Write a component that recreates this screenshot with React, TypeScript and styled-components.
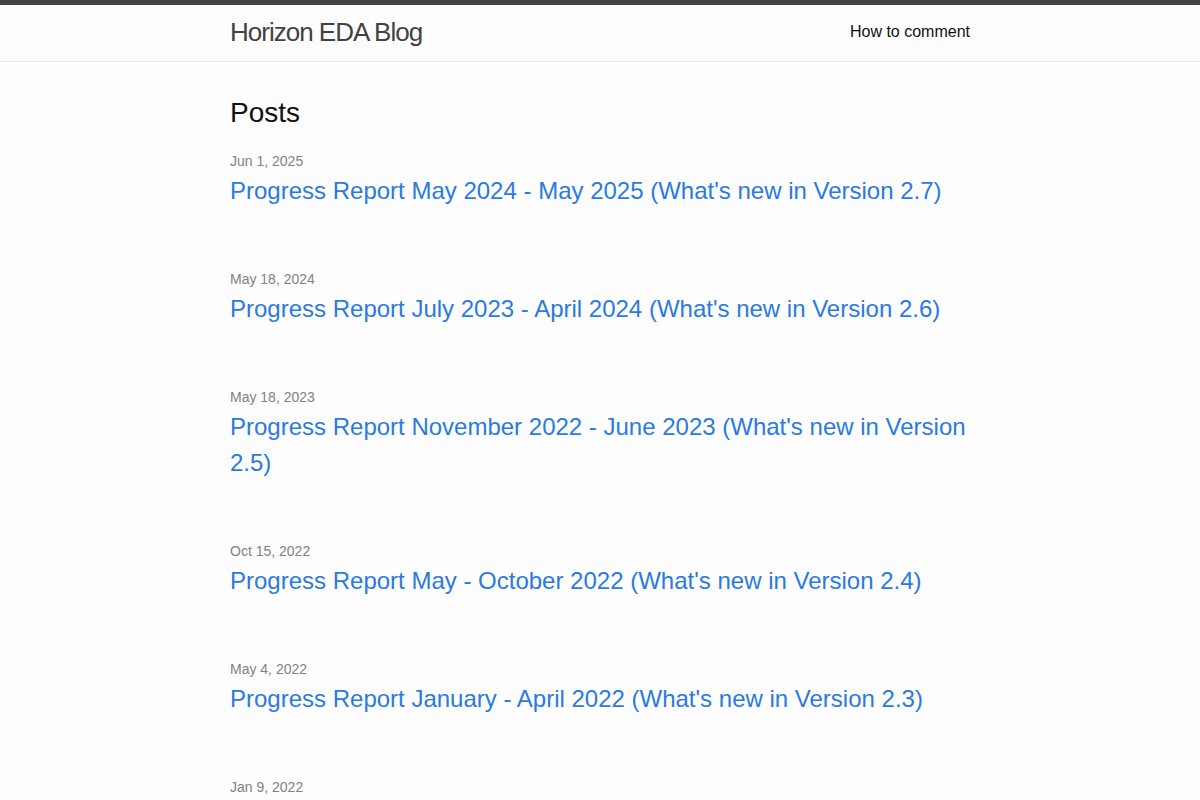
import * as React from "react";
import styled, { createGlobalStyle } from "styled-components";

const GlobalStyle = createGlobalStyle`
	html, body {
		margin: 0;
		padding: 0;
	}

	body {
		background-color: #fdfdfd;
		color: #111;
		font-family: "Liberation Sans", Arial, sans-serif;
		font-size: 16px;
		line-height: 1.5;
	}
`;

const Wrapper = styled.div`
	max-width: 740px;
	margin: 0 auto;
	padding: 0 30px;
`;

const SiteHeader = styled.header`
	border-top: 5px solid #424242;
	border-bottom: 1px solid #e8e8e8;
	min-height: 56px;

	${Wrapper} {
		display: flex;
		justify-content: space-between;
		align-items: flex-start;
	}
`;

const SiteTitle = styled.a`
	font-size: 26px;
	font-weight: 300;
	line-height: 54px;
	letter-spacing: -1px;
	color: #424242;
	text-decoration: none;
`;

const NavLink = styled.a`
	color: #111;
	line-height: 54px;
	text-decoration: none;
`;

const Main = styled.main`
	padding: 30px 0;
`;

const Heading = styled.h2`
	font-size: 28px;
	font-weight: 400;
	line-height: 1.5;
	margin: 0 0 17px;
`;

const PostList = styled.ul`
	list-style: none;
	margin: 0;
	padding: 0;
`;

const PostItem = styled.li`
	margin-bottom: 60px;
`;

const PostMeta = styled.span`
	display: block;
	font-size: 14px;
	line-height: 21px;
	color: #828282;
`;

const PostTitle = styled.h3`
	font-size: 24px;
	font-weight: 400;
	line-height: 36px;
	margin: 1px 0 0;

	a {
		color: #2a7ae2;
		text-decoration: none;
	}
`;

const posts = [
	{ date: "Jun 1, 2025", title: "Progress Report May 2024 - May 2025 (What's new in Version 2.7)" },
	{ date: "May 18, 2024", title: "Progress Report July 2023 - April 2024 (What's new in Version 2.6)" },
	{ date: "May 18, 2023", title: "Progress Report November 2022 - June 2023 (What's new in Version 2.5)" },
	{ date: "Oct 15, 2022", title: "Progress Report May - October 2022 (What's new in Version 2.4)" },
	{ date: "May 4, 2022", title: "Progress Report January - April 2022 (What's new in Version 2.3)" },
	{ date: "Jan 9, 2022", title: "Progress Report October - December 2021 (What's new in Version 2.2)" },
];

const App = (): JSX.Element => (
	<>
		<GlobalStyle />
		<SiteHeader>
			<Wrapper>
				<SiteTitle href="#">Horizon EDA Blog</SiteTitle>
				<NavLink href="#">How to comment</NavLink>
			</Wrapper>
		</SiteHeader>
		<Main>
			<Wrapper>
				<Heading>Posts</Heading>
				<PostList>
					{posts.map((post) => (
						<PostItem key={post.title}>
							<PostMeta>{post.date}</PostMeta>
							<PostTitle>
								<a href="#">{post.title}</a>
							</PostTitle>
						</PostItem>
					))}
				</PostList>
			</Wrapper>
		</Main>
	</>
);

export default App;
